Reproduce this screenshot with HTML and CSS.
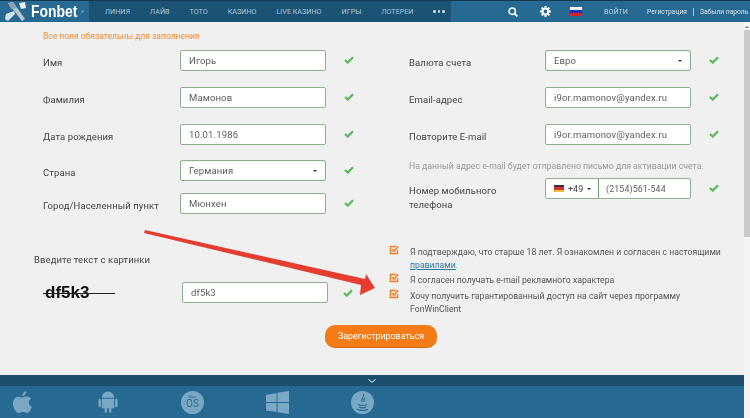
FILE: index.html
```html
<!DOCTYPE html>
<html lang="ru">
<head>
<meta charset="utf-8">
<title>Fonbet</title>
<link rel="stylesheet" href="styles.css">
</head>
<body>
<div class="app">
  <header class="top">
    <div class="brand">
      <svg class="brand-icon" viewBox="0 0 24 20" width="24" height="20">
        <path d="M3 1 L8 0 L20 17 L17 19 Z" fill="#b9c6cf"/>
        <path d="M3 1 L8 0 L12 6 L6 7 Z" fill="#8da3b1"/>
        <path d="M14 1 L20 0 L21 6 L16 7 Z" fill="#e8f0f5"/>
        <path d="M1 12 L9 9 L10 12 L3 19 L0 17 Z" fill="#d7e3ea"/>
      </svg>
      <span class="brand-name">Fonbet</span>
      <span class="brand-dot"></span>
    </div>
    <nav class="nav">
      <a>Линия</a><a>Лайв</a><a>Тото</a><a>Казино</a><a>Live казино</a><a>Игры</a><a>Лотереи</a>
      <span class="dots"><i></i><i></i><i></i></span>
    </nav>
    <div class="tools">
      <svg class="tool-search" viewBox="0 0 10 10" width="10" height="10"><circle cx="4.2" cy="4.2" r="3.2" fill="none" stroke="#fff" stroke-width="1.5"/><path d="M6.6 6.6 L9.4 9.4" stroke="#fff" stroke-width="1.7"/></svg>
      <svg class="tool-gear" viewBox="0 0 12 12" width="11" height="11"><circle cx="6" cy="6" r="3.2" fill="none" stroke="#fff" stroke-width="2.2"/><path d="M6 0 V2.5 M6 9.5 V12 M0 6 H2.5 M9.5 6 H12 M1.8 1.8 L3.5 3.5 M8.5 8.5 L10.2 10.2 M10.2 1.8 L8.5 3.5 M3.5 8.5 L1.8 10.2" stroke="#fff" stroke-width="2"/></svg>
      <span class="flag-ru"><i></i><i></i><i></i></span>
      <a class="login">Войти</a>
      <span class="links"><a>Регистрация</a><b></b><a>Забыли пароль</a></span>
    </div>
  </header>

  <div class="page">
    <main class="content">
      <p class="required">Все поля обязательны для заполнения</p>
      <div class="columns">
        <div class="col col-left">
          <div class="row"><label>Имя</label><div class="field">Игорь</div><svg class="ok" viewBox="0 0 10 8" width="10" height="8"><path d="M1 4 L3.8 6.6 L9 1.2" fill="none" stroke="#5cb85c" stroke-width="2.2"/></svg></div>
          <div class="row"><label>Фамилия</label><div class="field">Мамонов</div><svg class="ok" viewBox="0 0 10 8" width="10" height="8"><path d="M1 4 L3.8 6.6 L9 1.2" fill="none" stroke="#5cb85c" stroke-width="2.2"/></svg></div>
          <div class="row row-tight"><label>Дата рождения</label><div class="field">10.01.1986</div><svg class="ok" viewBox="0 0 10 8" width="10" height="8"><path d="M1 4 L3.8 6.6 L9 1.2" fill="none" stroke="#5cb85c" stroke-width="2.2"/></svg></div>
          <div class="row row-tighter"><label>Страна</label><div class="field select">Германия<span class="caret"></span></div><svg class="ok" viewBox="0 0 10 8" width="10" height="8"><path d="M1 4 L3.8 6.6 L9 1.2" fill="none" stroke="#5cb85c" stroke-width="2.2"/></svg></div>
          <div class="row"><label>Город/Населенный пункт</label><div class="field">Мюнхен</div><svg class="ok" viewBox="0 0 10 8" width="10" height="8"><path d="M1 4 L3.8 6.6 L9 1.2" fill="none" stroke="#5cb85c" stroke-width="2.2"/></svg></div>
        </div>
        <div class="col col-right">
          <div class="row"><label>Валюта счета</label><div class="field select">Евро<span class="caret"></span></div><svg class="ok" viewBox="0 0 10 8" width="10" height="8"><path d="M1 4 L3.8 6.6 L9 1.2" fill="none" stroke="#5cb85c" stroke-width="2.2"/></svg></div>
          <div class="row"><label>Email-адрес</label><div class="field">i9or.mamonov@yandex.ru</div><svg class="ok" viewBox="0 0 10 8" width="10" height="8"><path d="M1 4 L3.8 6.6 L9 1.2" fill="none" stroke="#5cb85c" stroke-width="2.2"/></svg></div>
          <div class="row"><label>Повторите E-mail</label><div class="field">i9or.mamonov@yandex.ru</div><svg class="ok" viewBox="0 0 10 8" width="10" height="8"><path d="M1 4 L3.8 6.6 L9 1.2" fill="none" stroke="#5cb85c" stroke-width="2.2"/></svg></div>
          <p class="hint">На данный адрес e-mail будет отправлено письмо для активации счета.</p>
          <div class="row row-phone"><label>Номер мобильного телефона</label>
            <div class="field phone">
              <span class="code"><span class="flag-de"><i></i><i></i><i></i></span>+49<span class="caret caret-code"></span></span>
              <span class="number">(2154)561-544</span>
            </div>
            <svg class="ok ok-center" viewBox="0 0 10 8" width="10" height="8"><path d="M1 4 L3.8 6.6 L9 1.2" fill="none" stroke="#5cb85c" stroke-width="2.2"/></svg>
          </div>
        </div>
      </div>

      <div class="lower">
        <div class="captcha">
          <p class="captcha-label">Введите текст с картинки</p>
          <div class="captcha-row">
            <div class="captcha-img"><span>df5k3</span></div>
            <div class="field">df5k3</div>
            <svg class="ok" viewBox="0 0 10 8" width="10" height="8"><path d="M1 4 L3.8 6.6 L9 1.2" fill="none" stroke="#5cb85c" stroke-width="2.2"/></svg>
          </div>
        </div>
        <ul class="checks">
          <li><svg class="box" viewBox="0 0 10 10" width="10" height="10"><path d="M7.5 1.5 H1.5 V8.5 H8.5 V5" fill="none" stroke="#f47b20" stroke-width="1.4"/><path d="M3 4.4 L5 6.2 L9.2 1.4" fill="none" stroke="#f47b20" stroke-width="1.5"/></svg><span>Я подтверждаю, что старше 18 лет. Я ознакомлен и согласен с настоящими <a class="rules">правилами</a>.</span></li>
          <li><svg class="box" viewBox="0 0 10 10" width="10" height="10"><path d="M7.5 1.5 H1.5 V8.5 H8.5 V5" fill="none" stroke="#f47b20" stroke-width="1.4"/><path d="M3 4.4 L5 6.2 L9.2 1.4" fill="none" stroke="#f47b20" stroke-width="1.5"/></svg><span>Я согласен получать e-mail рекламного характера</span></li>
          <li><svg class="box" viewBox="0 0 10 10" width="10" height="10"><path d="M7.5 1.5 H1.5 V8.5 H8.5 V5" fill="none" stroke="#f47b20" stroke-width="1.4"/><path d="M3 4.4 L5 6.2 L9.2 1.4" fill="none" stroke="#f47b20" stroke-width="1.5"/></svg><span>Хочу получить гарантированный доступ на сайт через программу FonWinClient</span></li>
        </ul>
      </div>

      <div class="submit-row"><button class="submit">Зарегистрироваться</button></div>

      <footer class="foot">
        <div class="foot-bar"><svg viewBox="0 0 8 4" width="8" height="4"><path d="M.5 .5 L4 3.3 L7.5 .5" fill="none" stroke="#fff" stroke-width="1"/></svg></div>
        <div class="foot-icons">
          <svg class="apple" viewBox="0 0 20 24" width="19" height="23"><path d="M14 0 C14 3 12 5.5 9.5 5.5 C9.5 3 11.5 .5 14 0 Z M10 7 C12 6 14 5.500 16 6 C17.5 6.3 18.3 7.2 19 8 C15.5 10 16 15 20 16.5 C19 19.5 17 23 15 23 C13.5 23 12.5 22 10.5 22 C8.5 22 7.5 23 6 23 C3 23 0 17 0 13 C0 8.5 3 6 6 6 C7.500 6 9 7 10 7 Z" fill="#7aa8c4"/></svg>
          <svg viewBox="0 0 20 23" width="20" height="22"><path d="M3.500 7 A6.500 6.500 0 0 1 16.500 7 Z M3.500 8 H16.500 V18 H13.500 V22 A1.500 1.500 0 0 1 11 22 V18 H9 V22 A1.500 1.500 0 0 1 6.500 22 V18 H3.500 Z" fill="#7aa8c4"/><rect x="0" y="8" width="2.600" height="9" rx="1.300" fill="#7aa8c4"/><rect x="17.400" y="8" width="2.600" height="9" rx="1.300" fill="#7aa8c4"/></svg>
          <span class="macos"><small>Mac</small>OS</span>
          <svg viewBox="0 0 23 23" width="23" height="23"><path d="M0 4 L10.500 2 V11 H0 Z M11.500 1.800 L23 0 V11 H11.500 Z M0 12 H10.500 V21 L0 19.500 Z M11.500 12 H23 V23 L11.500 21.200 Z" fill="#7aa8c4"/></svg>
          <svg viewBox="0 0 23 23" width="23" height="23"><circle cx="11.500" cy="11.500" r="11.500" fill="#7aa8c4"/><path d="M12.500 3 C14 6 9.500 7.500 11 11 M14 7 C12 8.500 13 10 13 11 M7 13.500 C9 14.800 14 14.800 16 13.500 M8 16 C10 17 13 17 15 16 M6 18.200 C9 19.500 14 19.500 17 18.200" fill="none" stroke="#266a93" stroke-width="1.100"/></svg>
        </div>
      </footer>
    </main>
    <aside class="scrollbar"><span class="scroll-up"></span><span class="thumb"></span></aside>
  </div>

  <svg class="arrow" viewBox="0 0 750 418" width="750" height="418"><polygon points="145,230 365,279 366,274 375,288 360,295 361,285 144,233" fill="#e53e30"/></svg>
</div>
</body>
</html>
```

FILE: styles.css
```css
* { box-sizing: border-box; }
html, body { margin: 0; padding: 0; }
body {
  width: 750px;
  height: 418px;
  overflow: hidden;
  background: #f0f0f0;
  font-family: Roboto, "Liberation Sans", sans-serif;
  color: #444;
}
.app {
  position: relative;
  width: 750px;
  height: 418px;
  display: flex;
  flex-direction: column;
  filter: blur(0.5px);
}
a { text-decoration: none; }
p { margin: 0; }

/* header */
.top {
  height: 22px;
  flex: none;
  display: flex;
  background: #266a93;
  border-top: 1px solid #14384e;
  color: #fff;
}
.brand {
  width: 89px;
  display: flex;
  align-items: center;
  padding-left: 5px;
  flex: none;
}
.brand-icon { flex: none; }
.brand-name {
  font-family: "Liberation Sans", sans-serif;
  font-weight: 700;
  font-size: 17px;
  margin-left: 2px;
  width: 45px;
  line-height: 20px;
  white-space: nowrap;
  transform: scaleX(.82);
  transform-origin: left center;
}
.brand-dot {
  width: 3px;
  height: 3px;
  border-radius: 50%;
  background: #5d93b3;
  margin-left: 5px;
}
.nav {
  width: 362px;
  flex: none;
  background: #1c5374;
  display: flex;
  align-items: center;
  gap: 20px;
  padding-left: 16px;
  font-size: 7.200px;
  text-transform: uppercase;
  white-space: nowrap;
  color: #a9c5d6;
}
.dots { display: flex; gap: 2px; }
.dots i { width: 2.500px; height: 2.500px; border-radius: 50%; background: #c7d9e4; }
.tools {
  flex: 1;
  display: flex;
  align-items: center;
  padding-left: 57px;
}
.tool-search { flex: none; }
.tool-gear { margin-left: 22px; flex: none; }
.flag-ru {
  width: 12px;
  height: 9px;
  margin-left: 19px;
  display: flex;
  flex-direction: column;
  flex: none;
}
.flag-ru i { flex: 1; }
.flag-ru i:nth-child(1) { background: #fff; }
.flag-ru i:nth-child(2) { background: #2233a8; }
.flag-ru i:nth-child(3) { background: #d8202a; }
.login {
  margin-left: 22px;
  font-size: 7.200px;
  text-transform: uppercase;
  color: #b9d1df;
}
.links {
  margin-left: 19px;
  display: flex;
  align-items: center;
  font-size: 6.700px;
  color: #d5e3ec;
  white-space: nowrap;
}
.links b { width: 1px; height: 8px; background: #a9c5d6; margin: 0 6px; }

/* page */
.page {
  flex: 1;
  display: flex;
  min-height: 0;
}
.content {
  flex: 1;
  min-width: 0;
  display: flex;
  flex-direction: column;
}
.scrollbar {
  width: 6px;
  flex: none;
  background: #f4f4f4;
  display: flex;
  flex-direction: column;
  align-items: center;
}
.scroll-up {
  margin-top: 4px;
  border: 2px solid transparent;
  border-top: 0;
  border-bottom: 2px solid #777;
}
.thumb {
  margin-top: 2px;
  width: 6px;
  height: 207px;
  background: #c9c9c9;
}
.required {
  margin: 8px 0 0 43px;
  font-size: 8.500px;
  line-height: 12px;
  color: #f58a33;
}
.columns {
  display: flex;
  margin-top: 8px;
  padding-left: 43px;
}
.col { flex: none; display: flex; flex-direction: column; }
.col-left { width: 366px; }
.col-right { width: 330px; }
.row {
  display: flex;
  align-items: center;
  height: 21px;
  margin-bottom: 16px;
  font-size: 9.500px;
}
.row-tight { margin-bottom: 15px; }
.row-tighter { margin-bottom: 12px; }
.col-right .row { margin-bottom: 16px; }
.row label {
  flex: none;
  letter-spacing: .1px;
  color: #444;
  line-height: 14px;
  margin-top: 5px;
}
.col-left label { width: 137px; }
.col-right label { width: 136px; }
.field {
  flex: none;
  width: 146px;
  height: 21px;
  display: flex;
  align-items: center;
  padding: 0 7px 0 8px;
  background: #fff;
  border: 1px solid #8db08e;
  border-radius: 2px;
  font-size: 9.500px;
  letter-spacing: .14px;
  color: #5c5c5c;
}
.select { justify-content: space-between; box-shadow: inset 0 0 3px #ddd; }
.caret {
  width: 0;
  height: 0;
  border-left: 2.500px solid transparent;
  border-right: 2.500px solid transparent;
  border-top: 2.500px solid #333;
  margin-right: 1px;
}
.ok { flex: none; margin-left: 18px; margin-top: -1px; }
.hint {
  font-size: 8.700px;
  line-height: 12px;
  color: #9a9a9a;
  margin: -1px 0 6px;
}
.row-phone { align-items: flex-start; }
.row-phone label { margin-top: 6px; width: 136px; padding-right: 30px; }
.ok-center { align-self: center; }
.phone { padding: 0; }
.code {
  width: 53px;
  height: 100%;
  display: flex;
  align-items: center;
  padding-left: 8px;
  border-right: 1px solid #6f9f70;
  color: #444;
  font-size: 9px;
  letter-spacing: 0;
  flex: none;
}
.flag-de { width: 10px; height: 7px; display: flex; flex-direction: column; margin-right: 4px; }
.flag-de i { flex: 1; }
.flag-de i:nth-child(1) { background: #333; }
.flag-de i:nth-child(2) { background: #d8303a; }
.flag-de i:nth-child(3) { background: #f0c030; }
.caret-code { margin-left: 4px; }
.number { padding-left: 7px; font-size: 8.800px; }

/* lower */
.lower {
  display: flex;
  height: 91px;
  padding-left: 34px;
}
.captcha { width: 356px; flex: none; padding-top: 24px; }
.captcha-label { font-size: 9.500px; letter-spacing: .08px; line-height: 12px; color: #444; }
.captcha-row {
  display: flex;
  align-items: center;
  margin-top: 16px;
}
.captcha-img {
  position: relative;
  width: 148px;
  flex: none;
  padding-left: 11px;
  font-family: "Liberation Sans", sans-serif;
  font-weight: 700;
  font-size: 17px;
  line-height: 16px;
  color: #111;
}
.captcha-img::after {
  content: "";
  position: absolute;
  left: 9px;
  width: 72px;
  top: 8px;
  height: 1px;
  background: #222;
}
.captcha-row .ok { margin-left: 15px; margin-top: 1px; }
.checks {
  list-style: none;
  margin: 0 0 0 -1px;
  padding: 16px 0 0;
  width: 336px;
  font-size: 8.700px;
  line-height: 12.500px;
  color: #555;
}
.checks li { display: flex; margin-bottom: 3.300px; }
.box { flex: none; margin-right: 11px; margin-top: -1px; }
.rules { color: #2a7ba8; text-decoration: underline; }

.submit-row { display: flex; padding-left: 325px; margin-top: 4px; }
.submit {
  width: 112px;
  height: 23px;
  border: 0;
  border-bottom: 1px solid #e06a10;
  border-radius: 10px;
  background: #f47b16;
  color: #fff;
  font-family: inherit;
  font-size: 8.900px;
  padding: 0;
}
.foot { margin-top: auto; flex: none; }
.foot-bar {
  height: 11px;
  background: #1c4f6e;
  display: flex;
  justify-content: flex-end;
  align-items: center;
  padding-right: 368px;
}
.foot-icons {
  height: 32px;
  background: #266a93;
  display: flex;
  align-items: center;
  padding-left: 13px;
  gap: 62px;
  overflow: hidden;
}
.apple { margin-right: 4px; flex: none; }
.macos {
  width: 23px;
  height: 23px;
  flex: none;
  margin-left: 1px;
  border-radius: 50%;
  background: #7aa8c4;
  color: #266a93;
  font-size: 10px;
  line-height: 9px;
  text-align: center;
  display: flex;
  flex-direction: column;
  align-items: center;
  padding-top: 3px;
}
.macos small { font-size: 4px; line-height: 5px; }

.arrow {
  position: absolute;
  left: 0;
  top: 0;
  pointer-events: none;
}
```
